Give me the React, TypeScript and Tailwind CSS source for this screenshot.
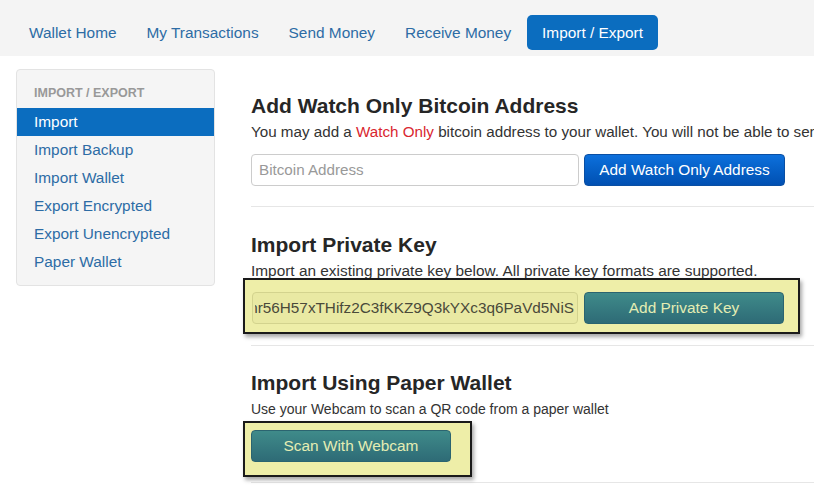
import React from 'react';

const navItems = ['Wallet Home', 'My Transactions', 'Send Money', 'Receive Money', 'Import / Export'];
const sideItems = ['Import', 'Import Backup', 'Import Wallet', 'Export Encrypted', 'Export Unencrypted', 'Paper Wallet'];

const Nav: React.FC = () => (
  <div className="h-[56px] bg-[#f4f4f4] flex items-start pt-[15px] pl-[14px]">
    {navItems.map(item => (
      <div
        key={item}
        className={`h-[35px] px-[15px] pt-[1px] flex items-center text-[15.4px] rounded-[5px] ${
          item === 'Import / Export' ? 'bg-[#0b6dbf] text-white ml-[1px]' : 'text-[#2d6ca5]'
        }`}
      >
        {item}
      </div>
    ))}
  </div>
);

const Sidebar: React.FC = () => (
  <div className="ml-[16px] mt-[13px] w-[199px] h-[217px] shrink-0 bg-[#f5f5f5] border border-[#e3e3e3] rounded-[4px]">
    <div className="pl-[17px] pt-[14px] pb-[6px] leading-[18px] text-[12.5px] font-bold text-[#999]">IMPORT / EXPORT</div>
    {sideItems.map(item => (
      <div
        key={item}
        className={`h-[28px] pl-[17px] flex items-center text-[15.4px] ${
          item === 'Import' ? 'bg-[#0b6dbf] text-white' : 'text-[#2d6ca5]'
        }`}
      >
        {item}
      </div>
    ))}
  </div>
);

const BlueButton: React.FC<{ label: string }> = ({ label }) => (
  <button className="w-[201px] h-[32px] rounded-[4px] text-[15.4px] text-white bg-gradient-to-b from-[#0d70dc] to-[#0150b2] border border-[#0a4fa3]">
    {label}
  </button>
);

const TealButton: React.FC<{ label: string }> = ({ label }) => (
  <button className="w-[200px] h-[32px] rounded-[4px] text-[15.4px] text-[#e4edb3] bg-gradient-to-b from-[#3f8b8a] to-[#2e6b76] border border-[#2b6470]">
    {label}
  </button>
);

const App: React.FC = () => {
  return (
    <div className="w-[814px] h-[489px] overflow-hidden bg-white font-['Liberation_Sans',Arial,sans-serif]">
      <Nav />
      <div className="flex">
        <Sidebar />
        <div className="ml-[36px] flex-1 min-w-0 pt-[37px]">
          <h2 className="text-[21px] leading-[26px] font-bold text-[#262626]">Add Watch Only Bitcoin Address</h2>
          <p className="mt-[3px] text-[15.2px] leading-[20px] text-[#333] whitespace-nowrap">
            You may add a <span className="text-[#d9262f]">Watch Only</span> bitcoin address to your wallet. You will not be able to send from it.
          </p>
          <div className="mt-[12px] flex gap-[5px]">
            <div className="w-[328px] h-[32px] border border-[#ccc] rounded-[4px] flex items-center px-[7px] text-[15.2px] text-[#999]">
              Bitcoin Address
            </div>
            <BlueButton label="Add Watch Only Address" />
          </div>
          <div className="mt-[20px] h-px bg-[#e6e6e6]" />

          <h2 className="mt-[25px] text-[21px] leading-[26px] font-bold text-[#262626]">Import Private Key</h2>
          <p className="mt-[3px] text-[15.4px] leading-[20px] text-[#333] whitespace-nowrap">
            Import an existing private key below. All private key formats are supported.
          </p>
          <div className="relative -mt-[3px] -ml-[8px] w-[557px] border-2 border-[#1a1a1a] bg-[#eeeea8] pt-[12px] pb-[8px] pl-[7px] flex gap-[6px] shadow-[2px_3px_4px_rgba(0,0,0,0.35)]">
            <div className="w-[326px] h-[32px] border border-[#d3d38e] bg-[#e9e9a3] rounded-[4px] pl-[2px] pr-[3px] flex items-center">
              <div className="flex-1 overflow-hidden flex justify-end whitespace-nowrap text-[15.3px] text-[#4a4a3a]">
                5JzK8vH2qLmWbnr56H57xTHifz2C3fKKZ9Q3kYXc3q6PaVd5NiS
              </div>
            </div>
            <TealButton label="Add Private Key" />
          </div>
          <div className="mt-[11px] h-px bg-[#e6e6e6]" />

          <h2 className="mt-[24px] text-[21px] leading-[26px] font-bold text-[#262626]">Import Using Paper Wallet</h2>
          <p className="mt-[3px] text-[14px] leading-[20px] text-[#333] whitespace-nowrap">
            Use your Webcam to scan a QR code from a paper wallet
          </p>
          <div className="relative mt-[2px] -ml-[8px] w-[229px] border-2 border-[#1a1a1a] bg-[#eeeea8] pt-[7px] pb-[13px] pl-[6px] shadow-[2px_3px_4px_rgba(0,0,0,0.35)]">
            <TealButton label="Scan With Webcam" />
          </div>
          <div className="mt-[5px] h-px bg-[#e6e6e6]" />
        </div>
      </div>
    </div>
  );
};

export default App;
